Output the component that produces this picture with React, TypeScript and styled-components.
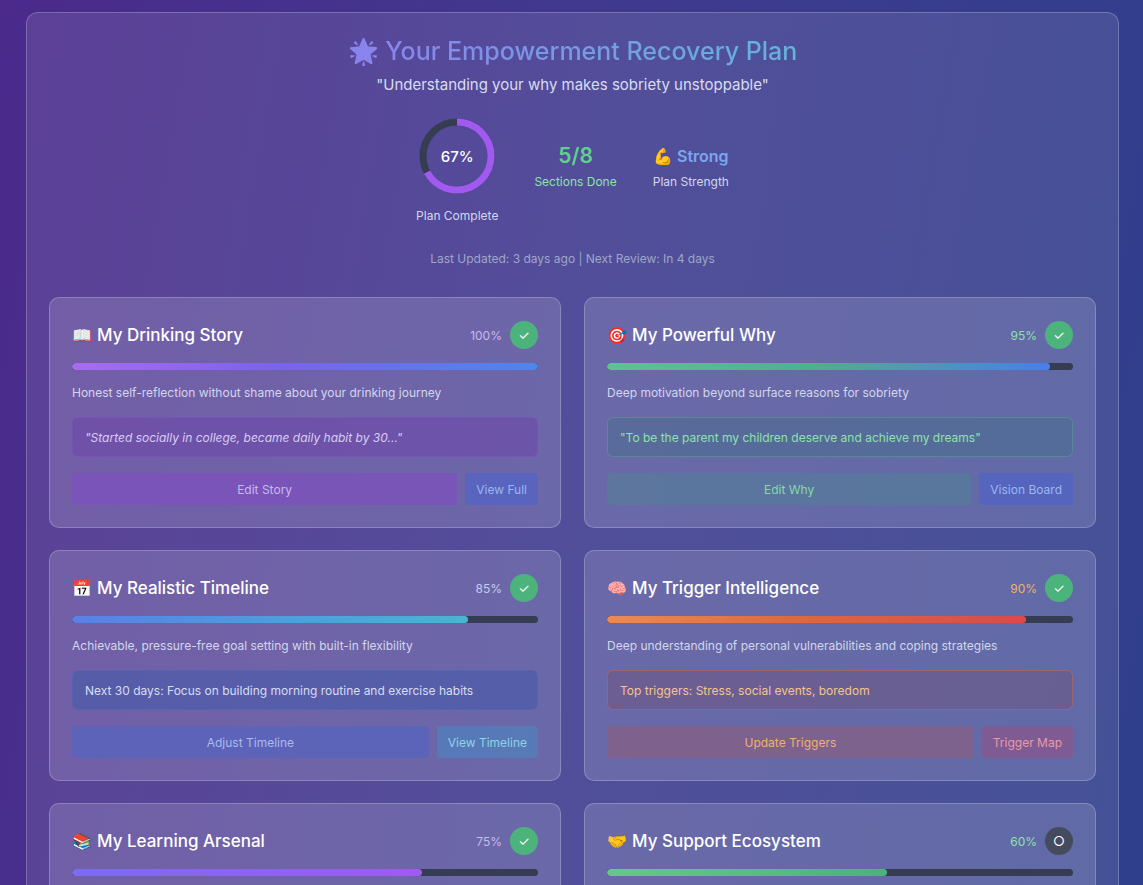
import styled, { createGlobalStyle } from "styled-components";

const Global = createGlobalStyle`
  html,body{ margin:0; height:100%; }
  body{ font-family: Inter, "Noto Sans", sans-serif; background:linear-gradient(100deg,#4b2a8c 0%,#3f3a8f 50%,#2f3f8c 100%); min-height:885px; overflow:hidden; }
`;

type Tone = "purple" | "green" | "blue" | "orange";

const TONES: Record<Tone, { bar: string; box: string; boxBorder: string; text: string; b1: string; b1t: string; b2: string; b2t: string; pct: string }> = {
  purple: { bar: "linear-gradient(90deg,#a86cf0,#7a63ea 45%,#4f86ea)", box: "rgba(110,70,170,.55)", boxBorder: "rgba(130,90,200,.4)", text: "#d8cdf4", b1: "rgba(125,80,190,.75)", b1t: "#c9b8ef", b2: "rgba(80,100,200,.7)", b2t: "#9bb6f0", pct: "#c7b9ef" },
  green: { bar: "linear-gradient(90deg,#5fc48a,#4bb38a 45%,#4a7ee8)", box: "rgba(70,110,140,.5)", boxBorder: "rgba(90,170,150,.45)", text: "#8ee0b0", b1: "rgba(80,130,150,.55)", b1t: "#86d8a8", b2: "rgba(80,100,200,.7)", b2t: "#9bb6f0", pct: "#8ee0b0" },
  blue: { bar: "linear-gradient(90deg,#5b7fe6,#4aa3dc 60%,#46b6d0)", box: "rgba(70,90,170,.6)", boxBorder: "rgba(90,110,200,.35)", text: "#d6dcf5", b1: "rgba(85,100,190,.75)", b1t: "#a9baf0", b2: "rgba(80,130,190,.7)", b2t: "#8fd2e8", pct: "#c7cdf0" },
  orange: { bar: "linear-gradient(90deg,#ee8a4e,#e0683a 45%,#dc4a48)", box: "rgba(110,85,130,.55)", boxBorder: "rgba(200,110,90,.5)", text: "#f4c58e", b1: "rgba(135,95,130,.7)", b1t: "#f0b070", b2: "rgba(140,85,140,.7)", b2t: "#e89aa8", pct: "#f0b070" },
};

const sections: { icon: string; title: string; pct: number; done: boolean; tone: Tone; bar?: string; desc: string; note: string; italic?: boolean; a: string; b: string }[] = [
  { icon: "📖", title: "My Drinking Story", pct: 100, done: true, tone: "purple", desc: "Honest self-reflection without shame about your drinking journey", note: "\"Started socially in college, became daily habit by 30...\"", italic: true, a: "Edit Story", b: "View Full" },
  { icon: "🎯", title: "My Powerful Why", pct: 95, done: true, tone: "green", desc: "Deep motivation beyond surface reasons for sobriety", note: "\"To be the parent my children deserve and achieve my dreams\"", a: "Edit Why", b: "Vision Board" },
  { icon: "📅", title: "My Realistic Timeline", pct: 85, done: true, tone: "blue", desc: "Achievable, pressure-free goal setting with built-in flexibility", note: "Next 30 days: Focus on building morning routine and exercise habits", a: "Adjust Timeline", b: "View Timeline" },
  { icon: "🧠", title: "My Trigger Intelligence", pct: 90, done: true, tone: "orange", desc: "Deep understanding of personal vulnerabilities and coping strategies", note: "Top triggers: Stress, social events, boredom", a: "Update Triggers", b: "Trigger Map" },
  { icon: "📚", title: "My Learning Arsenal", pct: 75, done: true, tone: "purple", bar: "linear-gradient(90deg,#7a6cf0,#a05af0)", desc: "Evidence-based knowledge and tools for lasting change", note: "Reading: This Naked Mind, completed 3 courses", a: "Continue Learning", b: "Library" },
  { icon: "🤝", title: "My Support Ecosystem", pct: 60, done: false, tone: "green", bar: "linear-gradient(90deg,#66c884,#4bb37a)", desc: "People, communities and resources that lift you up", note: "2 accountability partners, weekly group meeting", a: "Build Support", b: "Contacts" },
];

export default function App() {
  const r = 34, c = 2 * Math.PI * r;
  return (
    <Page>
      <Global />
      <Panel>
        <Header>
          <Title>🌟 Your Empowerment Recovery Plan</Title>
          <Quote>"Understanding your why makes sobriety unstoppable"</Quote>
          <Stats>
            <Stat>
              <Ring>
                <svg width="80" height="80" viewBox="0 0 80 80">
                  <circle cx="40" cy="40" r={r} fill="none" stroke="#363c52" strokeWidth="7" />
                  <circle cx="40" cy="40" r={r} fill="none" stroke="#a05af0" strokeWidth="7" strokeDasharray={`${c * 0.67} ${c}`} transform="rotate(-90 40 40)" />
                </svg>
                <RingLabel>67%</RingLabel>
              </Ring>
              <StatLabel $gap={12}>Plan Complete</StatLabel>
            </Stat>
            <Stat $top>
              <StatValue $color="#5fd08e">5/8</StatValue>
              <StatLabel $color="#8ee0b0">Sections Done</StatLabel>
            </Stat>
            <Stat $top>
              <StatValue $color="#7ba6f0" $small>💪 Strong</StatValue>
              <StatLabel>Plan Strength</StatLabel>
            </Stat>
          </Stats>
          <Meta>Last Updated: 3 days ago | Next Review: In 4 days</Meta>
        </Header>
        <Grid>
          {sections.map((s) => {
            const t = TONES[s.tone];
            return (
              <Card key={s.title}>
                <CardHead>
                  <CardTitle><span>{s.icon}</span>{s.title}</CardTitle>
                  <Status>
                    <Pct $color={t.pct}>{s.pct}%</Pct>
                    <Badge $done={s.done}>{s.done ? "✓" : "○"}</Badge>
                  </Status>
                </CardHead>
                <Track><Fill $bg={s.bar || t.bar} style={{ width: `${s.pct}%` }} /></Track>
                <Desc>{s.desc}</Desc>
                <Note $bg={t.box} $border={t.boxBorder} $color={t.text} $italic={s.italic}>{s.note}</Note>
                <Actions>
                  <Btn $bg={t.b1} $color={t.b1t} $grow>{s.a}</Btn>
                  <Btn $bg={t.b2} $color={t.b2t}>{s.b}</Btn>
                </Actions>
              </Card>
            );
          })}
        </Grid>
      </Panel>
    </Page>
  );
}

const Page = styled.div`
  padding:12px 24px 0 26px; position:relative;
`;

const Panel = styled.div`
  background:rgba(255,255,255,.1); border:1px solid rgba(255,255,255,.22); border-radius:12px;
  padding:20px 22px 24px;
`;

const Header = styled.div` display:flex; flex-direction:column; align-items:center; `;

const Title = styled.h1`
  margin:0; font-size:25px; font-weight:500; line-height:36px;
  background:linear-gradient(90deg,#8a82ee,#64b4da); -webkit-background-clip:text; background-clip:text; color:transparent;
`;

const Quote = styled.div` color:#d8dcf2; font-size:15px; margin-top:6px; `;

const Stats = styled.div` display:flex; gap:36px; margin-top:22px; align-items:flex-start; `;

const Stat = styled.div<{ $top?: boolean }>`
  display:flex; flex-direction:column; align-items:center; padding-top:${(p) => (p.$top ? "28px" : "0")};
`;

const Ring = styled.div` position:relative; width:80px; height:80px; `;

const RingLabel = styled.div`
  position:absolute; inset:0; display:flex; align-items:center; justify-content:center; color:#fff; font-size:15px; font-weight:500;
`;

const StatValue = styled.div<{ $color: string; $small?: boolean }>`
  color:${(p) => p.$color}; font-size:${(p) => (p.$small ? "16px" : "21px")}; font-weight:600; line-height:24px;
`;

const StatLabel = styled.div<{ $color?: string; $gap?: number }>`
  color:${(p) => p.$color || "#d4d6ef"}; font-size:12px; margin-top:${(p) => p.$gap ?? 6}px;
`;

const Meta = styled.div` color:#9ea6c8; font-size:12px; margin-top:28px; `;

const Grid = styled.div` display:grid; grid-template-columns:1fr 1fr; gap:22px 23px; margin-top:31px; `;

const Card = styled.div`
  background:rgba(255,255,255,.15); border:1px solid rgba(255,255,255,.22); border-radius:10px;
  padding:22px 22px 22px; min-height:184px;
`;

const CardHead = styled.div` display:flex; align-items:center; justify-content:space-between; height:30px; `;

const CardTitle = styled.div`
  color:#fff; font-size:17px; font-weight:500; display:flex; gap:5px; align-items:center;
  span{ font-size:16px; }
`;

const Status = styled.div` display:flex; align-items:center; gap:8px; `;

const Pct = styled.span<{ $color: string }>` color:${(p) => p.$color}; font-size:12px; `;

const Badge = styled.span<{ $done: boolean }>`
  width:28px; height:28px; border-radius:50%; display:flex; align-items:center; justify-content:center;
  background:${(p) => (p.$done ? "#4db37d" : "#454b5e")}; color:#fff; font-size:13px;
`;

const Track = styled.div` height:7px; border-radius:4px; background:#363c52; margin-top:13px; overflow:hidden; `;

const Fill = styled.div<{ $bg: string }>` height:100%; border-radius:4px; background:${(p) => p.$bg}; `;

const Desc = styled.div` color:#d3d6ee; font-size:12px; margin-top:15px; `;

const Note = styled.div<{ $bg: string; $border: string; $color: string; $italic?: boolean }>`
  margin-top:17px; padding:0 12px; height:38px; display:flex; align-items:center; border-radius:6px;
  background:${(p) => p.$bg}; border:1px solid ${(p) => p.$border}; color:${(p) => p.$color};
  font-size:12px; font-style:${(p) => (p.$italic ? "italic" : "normal")};
`;

const Actions = styled.div` display:flex; gap:8px; margin-top:16px; `;

const Btn = styled.button<{ $bg: string; $color: string; $grow?: boolean }>`
  flex:${(p) => (p.$grow ? "1" : "0 0 auto")}; height:32px; padding:0 11px; border:none; border-radius:4px;
  background:${(p) => p.$bg}; color:${(p) => p.$color}; font-family:inherit; font-size:12px;
`;
